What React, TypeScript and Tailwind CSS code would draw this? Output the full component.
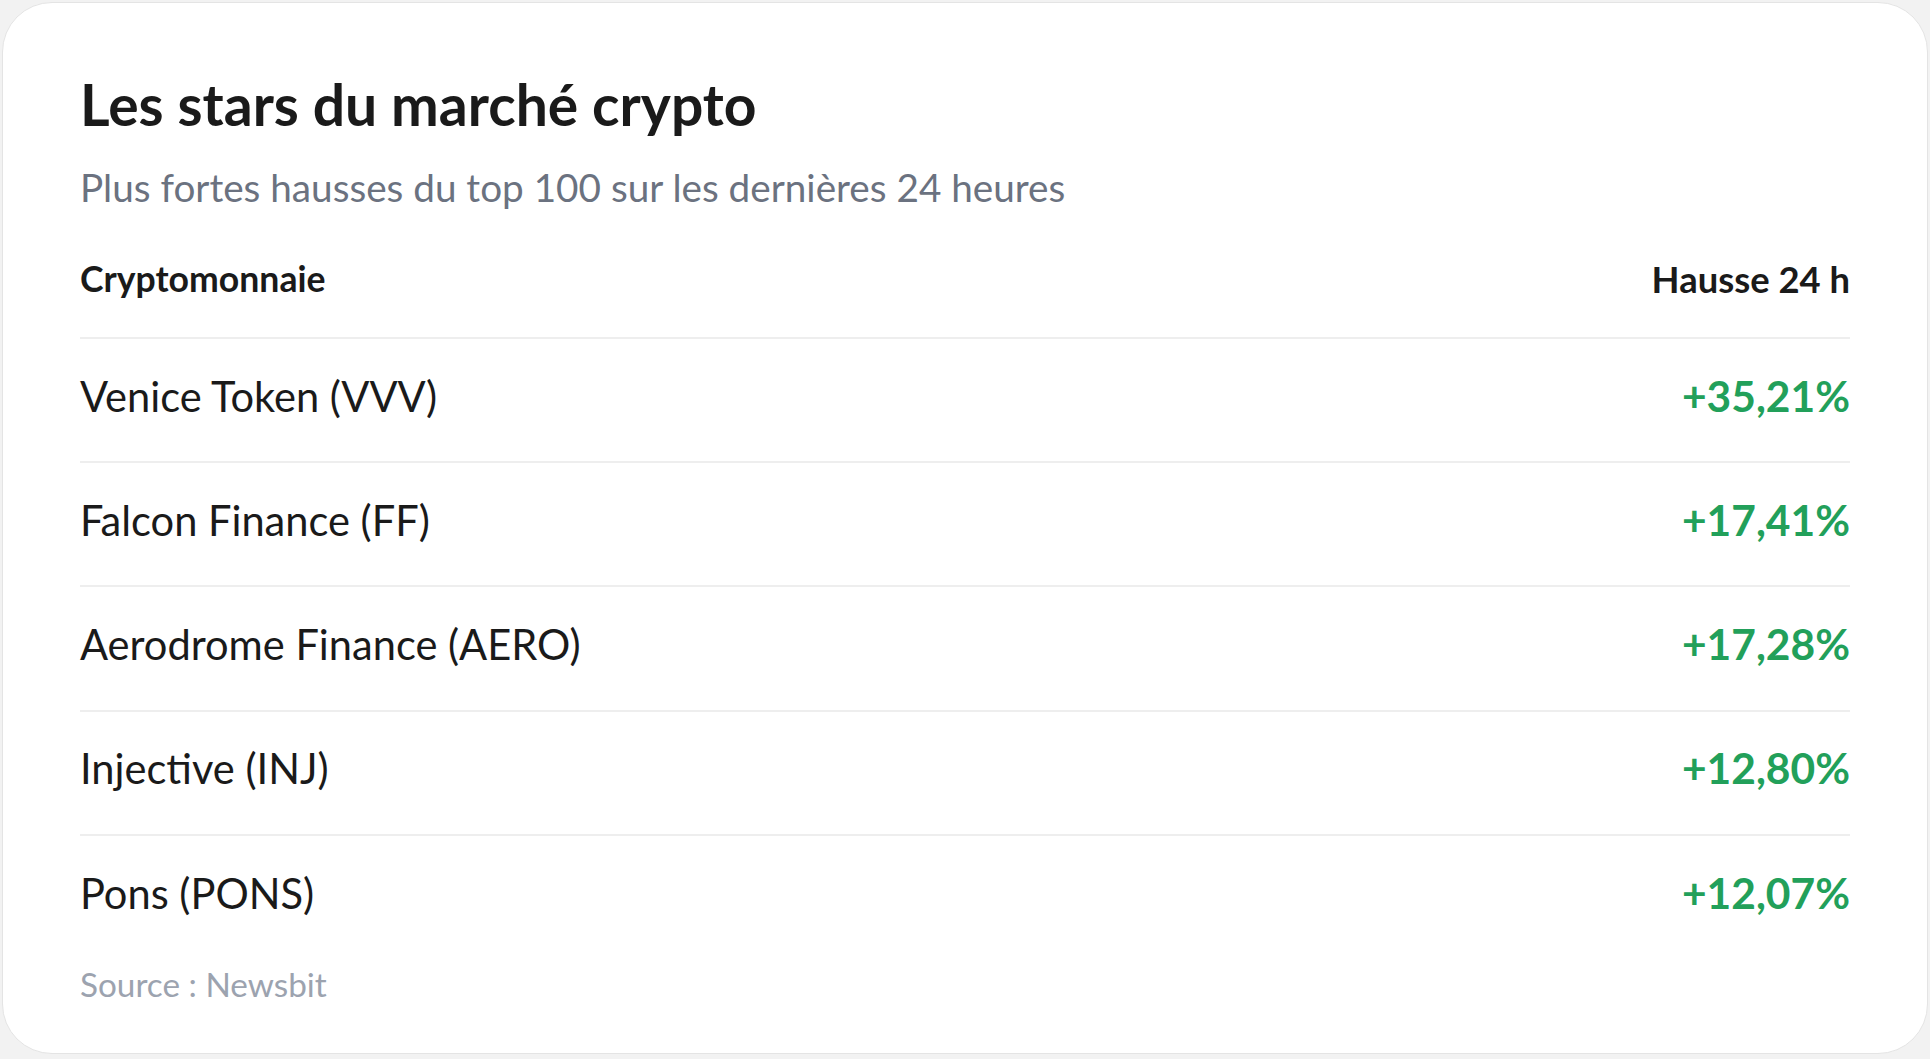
const rows = [
  { name: 'Venice Token (VVV)', change: '+35,21%' },
  { name: 'Falcon Finance (FF)', change: '+17,41%' },
  { name: 'Aerodrome Finance (AERO)', change: '+17,28%' },
  { name: 'Injective (INJ)', change: '+12,80%' },
  { name: 'Pons (PONS)', change: '+12,07%' },
];

export default function App() {
  return (
    <div className="min-h-screen bg-[#f2f2f2] p-[2px] font-['Lato',sans-serif]">
      <div className="h-[1052px] rounded-[50px] border border-[#e4e4e4] bg-white px-[77px] pt-[67px]">
        {/* Heading */}
        <h1 className="text-[57px] leading-[68px] font-bold text-[#1a1a1a]">
          Les stars du marché crypto
        </h1>
        <p className="mt-[26px] text-[38.7px] leading-[46px] text-[#6b7280]">
          Plus fortes hausses du top 100 sur les dernières 24 heures
        </p>

        {/* Table */}
        <div className="mt-[47px]">
          <div className="flex items-center justify-between border-b-2 border-[#eeeeee] pb-[36px] font-bold text-[#1a1a1a]">
            <span className="text-[35.6px] leading-[44px]">Cryptomonnaie</span>
            <span className="text-[36.4px] leading-[44px]">Hausse 24 h</span>
          </div>
          {rows.map((row, i) => (
            <div
              key={row.name}
              className={
                'flex h-[124.2px] items-center justify-between pb-[9px] ' +
                (i < rows.length - 1 ? 'border-b-2 border-[#eeeeee]' : '')
              }
            >
              <span className="text-[41.6px] leading-[50px] text-[#1a1a1a]">{row.name}</span>
              <span className="text-[42.5px] leading-[50px] font-bold text-[#22a05a]">{row.change}</span>
            </div>
          ))}
        </div>

        <p className="mt-[4px] text-[33.3px] leading-[40px] text-[#9ca3af]">Source : Newsbit</p>
      </div>
    </div>
  );
}
